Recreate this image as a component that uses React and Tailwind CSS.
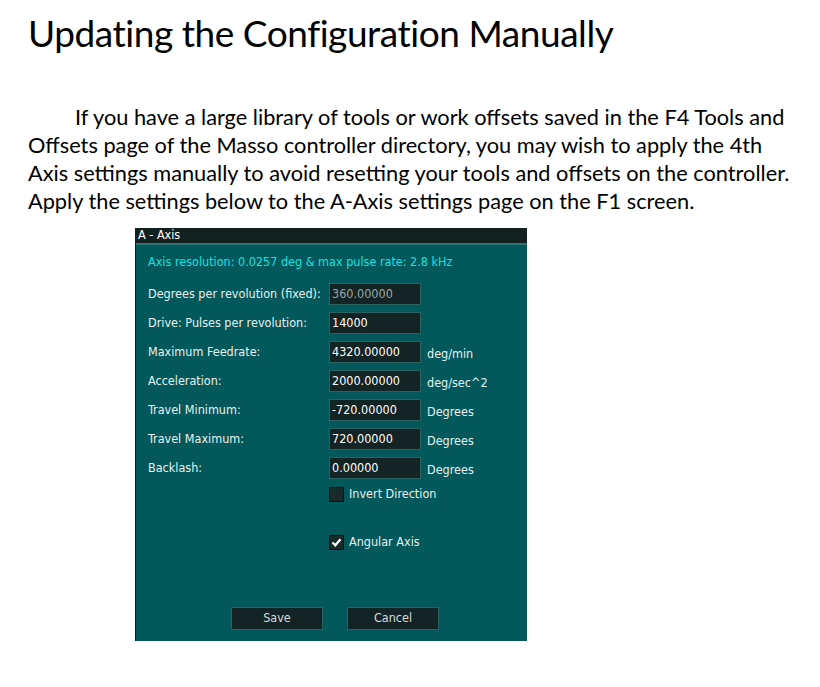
import React from 'react';

const rows = [
    { label: 'Degrees per revolution (fixed):', value: '360.00000', fixed: true },
    { label: 'Drive: Pulses per revolution:', value: '14000' },
    { label: 'Maximum Feedrate:', value: '4320.00000', unit: 'deg/min' },
    { label: 'Acceleration:', value: '2000.00000', unit: 'deg/sec^2' },
    { label: 'Travel Minimum:', value: '-720.00000', unit: 'Degrees' },
    { label: 'Travel Maximum:', value: '720.00000', unit: 'Degrees' },
    { label: 'Backlash:', value: '0.00000', unit: 'Degrees' },
];

const Checkbox = ({ checked, label, className }) => (
    <div className={`flex items-center ${className}`}>
        <div className="w-[15px] h-[15px] bg-[#1a2a2a] border border-[#0c1414] flex items-center justify-center">
            {checked && (
                <svg width="11" height="11" viewBox="0 0 11 11">
                    <path d="M1.5 5.5 L4.3 8.3 L9.5 2.2" stroke="#ffffff" strokeWidth="2.2" fill="none" />
                </svg>
            )}
        </div>
        <span className="ml-[5px] text-[#e6eeee]">{label}</span>
    </div>
);

const AxisPanel = () => (
    <div
        className="ml-[135px] w-[392px] h-[413px] bg-[#02585a] border-l border-[#0d1c1c] flex flex-col text-[12.5px] text-[#e8f0f0]"
        style={{ fontFamily: '"DejaVu Sans Condensed", "DejaVu Sans", sans-serif' }}
    >
        <div className="h-[17px] bg-[#132020] border-b-2 border-[#2c7575] flex items-center pl-[2px] text-white leading-none">
            A - Axis
        </div>
        <div className="pl-[12px] pt-[9px] text-[#19e0e0] leading-[16px]">
            Axis resolution: 0.0257 deg &amp; max pulse rate: 2.8 kHz
        </div>
        <div className="pl-[12px] pt-[13px] flex flex-col gap-[7px]">
            {rows.map(row => (
                <div key={row.label} className="flex items-center h-[22px]">
                    <div className="w-[181px]">{row.label}</div>
                    <div
                        className={`w-[92px] h-[22px] bg-[#142323] border border-[#2a6262] flex items-center pl-[2px] ${
                            row.fixed ? 'text-[#9aa6a6]' : 'text-white'
                        }`}
                    >
                        {row.value}
                    </div>
                    {row.unit && <div className="ml-[6px] mt-[4px]">{row.unit}</div>}
                </div>
            ))}
        </div>
        <Checkbox label="Invert Direction" className="ml-[193px] mt-[6px]" />
        <Checkbox checked label="Angular Axis" className="ml-[193px] mt-[29px]" />
        <div className="mt-auto mb-[11px] flex ml-[95px] gap-[24px]">
            <div className="w-[92px] h-[23px] bg-[#142323] border border-[#2a6262] flex items-center justify-center text-[#d4dddd]">
                Save
            </div>
            <div className="w-[92px] h-[23px] bg-[#142323] border border-[#2a6262] flex items-center justify-center text-[#d4dddd]">
                Cancel
            </div>
        </div>
    </div>
);

const App = () => {
    return (
        <div className="w-[820px] h-[687px] bg-white text-black overflow-hidden" style={{ fontFamily: 'Lato, "Open Sans", sans-serif' }}>
            <h1 className="ml-[28px] pt-[11px] text-[37px] leading-[44px] font-normal tracking-[-0.45px]">
                Updating the Configuration Manually
            </h1>
            <div className="ml-[28px] mt-[48px] text-[21.75px] leading-[28px] whitespace-nowrap">
                <div className="pl-[47px]">If you have a large library of tools or work offsets saved in the F4 Tools and</div>
                <div>Offsets page of the Masso controller directory, you may wish to apply the 4th</div>
                <div>Axis settings manually to avoid resetting your tools and offsets on the controller.</div>
                <div>Apply the settings below to the A-Axis settings page on the F1 screen.</div>
            </div>
            <div className="mt-[13px]">
                <AxisPanel />
            </div>
        </div>
    );
};

export default App;
